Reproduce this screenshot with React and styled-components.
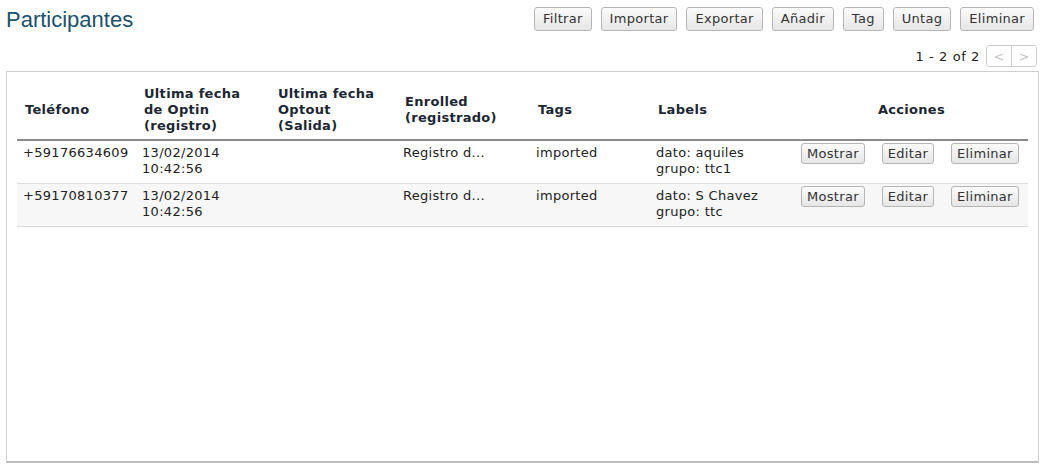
import React from "react";
import styled, { createGlobalStyle } from "styled-components";

const GlobalStyle = createGlobalStyle`
  html, body {
    margin: 0;
    padding: 0;
    background: #fff;
  }
  body {
    font-family: Verdana, "DejaVu Sans", sans-serif;
    font-size: 13px;
    letter-spacing: 0.3px;
    color: #222;
  }
`;

const Page = styled.div`
  width: 1044px;
  padding: 6px 6px 0 6px;
  box-sizing: border-box;
`;

const TopBar = styled.div`
  display: flex;
  justify-content: space-between;
  align-items: flex-start;
`;

const Title = styled.h1`
  margin: 1px 0 0 0;
  font-family: Arial, "Liberation Sans", sans-serif;
  font-weight: normal;
  font-size: 22px;
  line-height: 26px;
  letter-spacing: 0;
  color: #1a5170;
`;

const Toolbar = styled.div`
  display: flex;
  gap: 9px;
  margin-right: 4px;
  margin-top: 1px;
`;

const Button = styled.button`
  font-family: Verdana, "DejaVu Sans", sans-serif;
  font-size: 13px;
  letter-spacing: 0.3px;
  line-height: 16px;
  color: #333;
  padding: 3px 8px;
  border: 1px solid #b5b5b5;
  border-radius: 3px;
  background: linear-gradient(#fbfbfb, #e6e6e6);
  cursor: pointer;
`;

const SmallButton = styled(Button)`
  padding: 2px 5px;
  line-height: 15px;
`;

const PagerRow = styled.div`
  display: flex;
  justify-content: flex-end;
  align-items: center;
  gap: 6px;
  margin-top: 12px;
  margin-right: 1px;
`;

const PagerText = styled.span`
  color: #222;
  font-size: 13px;
  letter-spacing: 0.6px;
`;

const PagerGroup = styled.div`
  display: flex;
  border: 1px solid #ccc;
  border-radius: 3px;
  overflow: hidden;
`;

const PagerButton = styled.span`
  width: 24px;
  height: 20px;
  display: flex;
  align-items: center;
  justify-content: center;
  color: #c4c4c4;
  font-size: 13px;
  background: #fff;
  & + & {
    border-left: 1px solid #ccc;
  }
`;

const Panel = styled.div`
  margin-top: 4px;
  height: 392px;
  border: 1px solid #cfcfcf;
  border-bottom: 2px solid #bdbdbd;
  padding: 8px 10px;
  box-sizing: border-box;
  width: 1033px;
`;

const Table = styled.table`
  width: 1011px;
  border-collapse: collapse;
  table-layout: fixed;
`;

const Th = styled.th`
  text-align: ${(p) => (p.$center ? "center" : "left")};
  font-weight: bold;
  font-size: 13px;
  line-height: 16px;
  color: #1c2733;
  padding: 6px 8px 5px 8px;
  vertical-align: middle;
  border-bottom: 2px solid #8a8a8a;
`;

const Row = styled.tr`
  background: ${(p) => (p.$alt ? "#f7f7f7" : "#fff")};
  border-bottom: 1px solid #dcdcdc;
`;

const Td = styled.td`
  padding: 4px 6px 6px 6px;
  line-height: 16px;
  font-size: 13px;
  color: #222;
  vertical-align: top;
  white-space: nowrap;
`;

const ActionCell = styled.td`
  padding: 2px 6px 0 6px;
  vertical-align: top;
`;

const Actions = styled.div`
  display: flex;
  gap: 17px;
`;

const rows = [
  {
    phone: "+59176634609",
    optin: ["13/02/2014", "10:42:56"],
    enrolled: "Registro d...",
    tags: "imported",
    labels: ["dato: aquiles", "grupo: ttc1"],
  },
  {
    phone: "+59170810377",
    optin: ["13/02/2014", "10:42:56"],
    enrolled: "Registro d...",
    tags: "imported",
    labels: ["dato: S Chavez", "grupo: ttc"],
  },
];

const toolbar = ["Filtrar", "Importar", "Exportar", "Añadir", "Tag", "Untag", "Eliminar"];

export default function App() {
  return (
    <Page>
      <GlobalStyle />
      <TopBar>
        <Title>Participantes</Title>
        <Toolbar>
          {toolbar.map((t) => (
            <Button key={t}>{t}</Button>
          ))}
        </Toolbar>
      </TopBar>
      <PagerRow>
        <PagerText>1 - 2 of 2</PagerText>
        <PagerGroup>
          <PagerButton>&lt;</PagerButton>
          <PagerButton>&gt;</PagerButton>
        </PagerGroup>
      </PagerRow>
      <Panel>
        <Table>
          <colgroup>
            <col style={{ width: 119 }} />
            <col style={{ width: 134 }} />
            <col style={{ width: 127 }} />
            <col style={{ width: 133 }} />
            <col style={{ width: 120 }} />
            <col style={{ width: 145 }} />
            <col style={{ width: 233 }} />
          </colgroup>
          <thead>
            <tr>
              <Th>Teléfono</Th>
              <Th>
                Ultima fecha
                <br />
                de Optin
                <br />
                (registro)
              </Th>
              <Th>
                Ultima fecha
                <br />
                Optout
                <br />
                (Salida)
              </Th>
              <Th>
                Enrolled
                <br />
                (registrado)
              </Th>
              <Th>Tags</Th>
              <Th>Labels</Th>
              <Th $center>Acciones</Th>
            </tr>
          </thead>
          <tbody>
            {rows.map((r, i) => (
              <Row key={r.phone} $alt={i % 2 === 1}>
                <Td>{r.phone}</Td>
                <Td>
                  {r.optin[0]}
                  <br />
                  {r.optin[1]}
                </Td>
                <Td />
                <Td>{r.enrolled}</Td>
                <Td>{r.tags}</Td>
                <Td>
                  {r.labels[0]}
                  <br />
                  {r.labels[1]}
                </Td>
                <ActionCell>
                  <Actions>
                    <SmallButton>Mostrar</SmallButton>
                    <SmallButton>Editar</SmallButton>
                    <SmallButton>Eliminar</SmallButton>
                  </Actions>
                </ActionCell>
              </Row>
            ))}
          </tbody>
        </Table>
      </Panel>
    </Page>
  );
}
